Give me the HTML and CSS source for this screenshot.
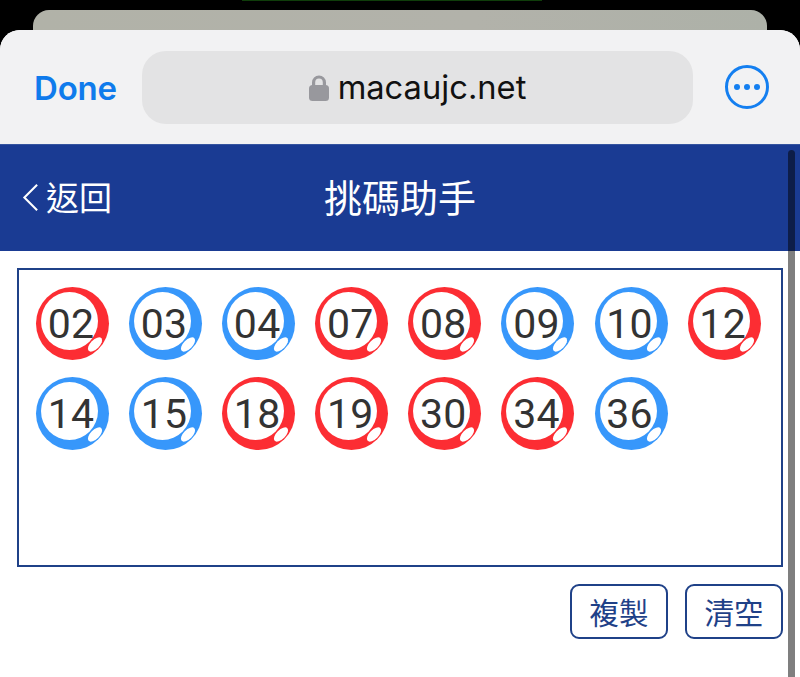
FILE: index.html
```html
<!DOCTYPE html>
<html lang="zh-Hant">
<head>
<meta charset="utf-8">
<title>挑碼助手</title>
<link rel="stylesheet" href="styles.css">
</head>
<body>
<div class="glow"></div>
<div class="back-card"></div>
<main class="sheet">
  <div class="toolbar">
    <span class="done">Done</span>
    <div class="url">
      <svg class="lock" viewBox="0 0 20 26" aria-hidden="true"><path class="lock-shackle" d="M4.6 12V7.4a5.4 5.4 0 0 1 10.8 0V12"/><rect class="lock-body" x="0" y="10" width="20" height="16" rx="3.5"/></svg>
      <span class="host">macaujc.net</span>
    </div>
    <svg class="more" viewBox="0 0 46 46" aria-hidden="true"><circle class="more-ring" cx="23" cy="23" r="20.5"/><circle class="more-dot" cx="13" cy="23" r="3"/><circle class="more-dot" cx="23" cy="23" r="3"/><circle class="more-dot" cx="33" cy="23" r="3"/></svg>
  </div>
  <header class="nav">
    <a class="nav-back"><svg class="chev" viewBox="0 0 18 30" aria-hidden="true"><path d="M16 1.5 2.5 15 16 28.5"/></svg><span>返回</span></a>
    <h1 class="nav-title">挑碼助手</h1>
  </header>
  <section class="content">
    <div class="board">
      <div class="ball red"><span>02</span></div>
      <div class="ball blue"><span>03</span></div>
      <div class="ball blue"><span>04</span></div>
      <div class="ball red"><span>07</span></div>
      <div class="ball red"><span>08</span></div>
      <div class="ball blue"><span>09</span></div>
      <div class="ball blue"><span>10</span></div>
      <div class="ball red"><span>12</span></div>
      <div class="ball blue"><span>14</span></div>
      <div class="ball blue"><span>15</span></div>
      <div class="ball red"><span>18</span></div>
      <div class="ball red"><span>19</span></div>
      <div class="ball red"><span>30</span></div>
      <div class="ball red"><span>34</span></div>
      <div class="ball blue"><span>36</span></div>
    </div>
    <div class="actions">
      <button class="btn">複製</button>
      <button class="btn">清空</button>
    </div>
  </section>
  <div class="scrollbar"></div>
</main>
</body>
</html>
```
FILE: styles.css
```css
* { box-sizing: border-box; }
html, body { margin: 0; height: 677px; overflow: hidden; background: #000; }
body { font-family: "Noto Sans CJK TC", sans-serif; }

.glow { width: 300px; height: 1px; margin: 0 auto 9px; background: #0f3d0a; transform: translateX(-8px); }
.back-card { height: 20px; margin: 0 33px; border-radius: 16px 16px 0 0; background: linear-gradient(90deg, #b1b2a8, #b2b2aa 60%, #adb1a8); }

.sheet { position: relative; height: 647px; border-radius: 20px 20px 0 0; overflow: hidden; background: #fff; }

.toolbar { height: 114px; padding: 21px 30px 20px 34px; display: flex; align-items: center; background: #f2f2f3; }
.done { width: 108px; padding-top: 2px; font: 600 33px/1 Inter, sans-serif; letter-spacing: -0.2px; color: #0f7bec; }
.url { width: 551px; height: 73px; border-radius: 24px; background: #e3e3e4; display: flex; align-items: center; justify-content: center; gap: 10px; }
.lock { width: 20px; height: 26px; margin-top: 1px; }
.lock-shackle { fill: none; stroke: #98989d; stroke-width: 3.2; }
.lock-body { fill: #98989d; }
.host { margin-left: -1px; font: 400 32.7px/1 Inter, sans-serif; color: #111; }
.more { width: 46px; height: 46px; margin-left: auto; margin-top: -2px; }
.more-ring { fill: none; stroke: #147ff0; stroke-width: 3; }
.more-dot { fill: #147ff0; }

.nav { position: relative; height: 107px; padding-bottom: 4px; display: flex; align-items: center; justify-content: center; background: #1a3b93; color: #fff; border-top: 1px solid #35549f; }
.nav-back { position: absolute; left: 22px; top: 0; bottom: 3px; display: flex; align-items: center; gap: 7px; font-size: 33px; line-height: 1; }
.chev { width: 17px; height: 29px; margin-top: 2px; }
.chev path { fill: none; stroke: #fff; stroke-width: 2.2; }
.nav-title { margin: 0; font-size: 38px; font-weight: 400; line-height: 1; }

.content { padding: 17px 17px 0; }
.board { height: 299px; padding: 17px; border: 2px solid #1f4188; display: grid; grid-template-columns: repeat(8, 73px); grid-auto-rows: 73px; column-gap: 20.1px; row-gap: 17px; align-content: start; }

.ball { position: relative; width: 73px; height: 73px; border-radius: 50%; display: flex; align-items: center; justify-content: center; }
.ball.red { background: #fc2d33; }
.ball.blue { background: #3797fb; }
.ball::before { content: ""; position: absolute; left: 5px; top: 5px; width: 57px; height: 58px; border-radius: 50%; background: #fff; }
.ball::after { content: ""; position: absolute; left: 50px; top: 52.5px; width: 18px; height: 9px; border-radius: 50%; background: #fff; transform: rotate(-45deg); }
.ball span { position: relative; z-index: 1; margin: 2px 0 0 -3px; font: 400 41px/1 Roboto, sans-serif; letter-spacing: 0.3px; color: #333; }

.actions { margin-top: 17px; display: flex; justify-content: flex-end; gap: 17px; }
.btn { width: 98px; height: 55px; padding: 0; border: 2px solid #1f4188; border-radius: 9px; background: #fff; font: 400 29.5px/1 "Noto Sans CJK TC", sans-serif; color: #1f4188; }

.scrollbar { position: absolute; right: 5px; top: 120px; bottom: 0; width: 7px; border-radius: 4px 4px 0 0; background: rgba(0, 0, 0, 0.5); }
```
